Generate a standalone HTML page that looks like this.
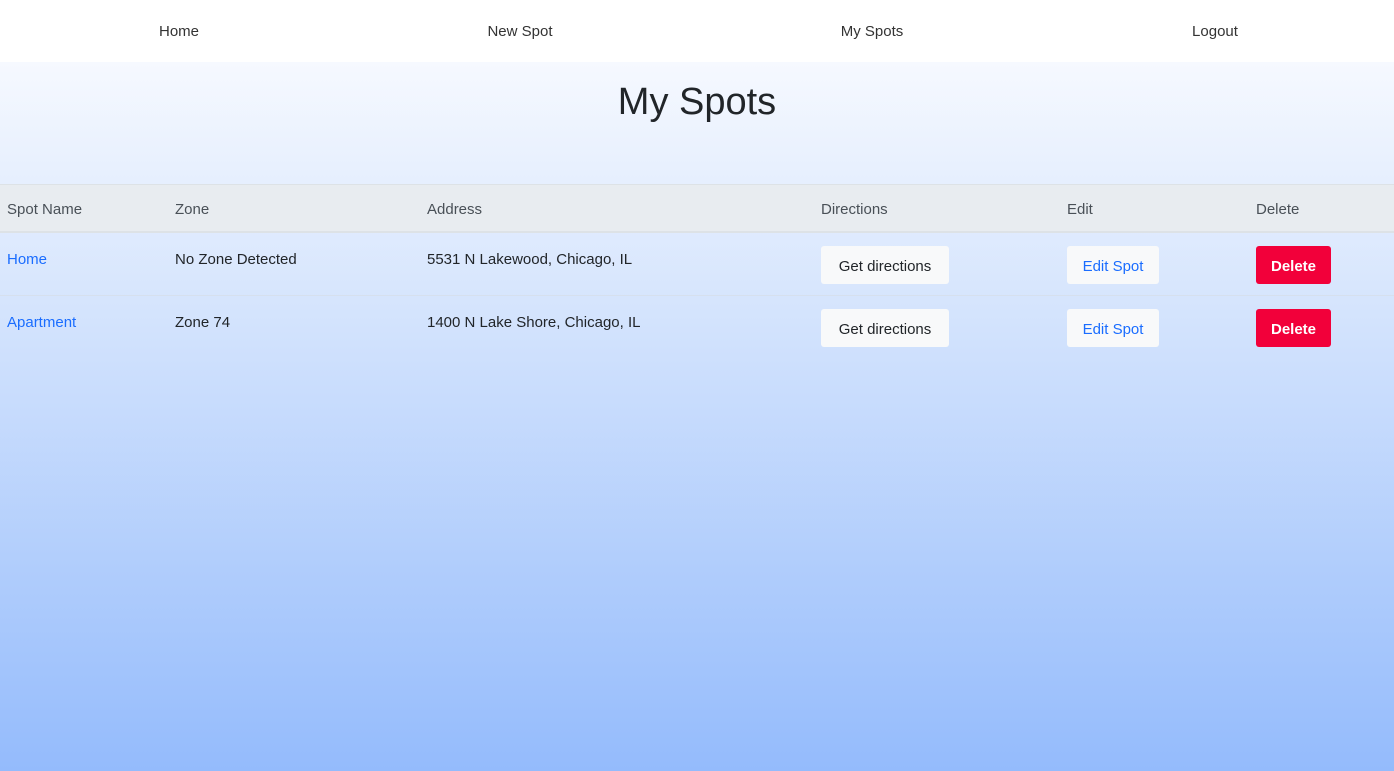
<!DOCTYPE html>
<html><head><style>
*{margin:0;padding:0;box-sizing:border-box}
body{width:1394px;height:771px;overflow:hidden;font-family:"Liberation Sans",sans-serif;background:linear-gradient(#f6f9ff 62px,#d6e5fd 300px,#94bbfc 771px);color:#212529;position:relative}
nav{height:62px;background:#fff;position:relative}
nav span{position:absolute;top:23px;font-size:15px;color:#333;transform:translateX(-50%)}
h1{position:absolute;top:81px;left:0;width:100%;text-align:center;font-weight:400;font-size:38px;color:#212529}
.hdr{position:absolute;top:184px;left:0;width:1394px;height:49px;background:#e8ecf0;border-top:1px solid #dde2e6;border-bottom:2px solid #dde2e6}
.row{position:absolute;left:0;width:1394px;height:63px}
.t{position:absolute;font-size:15px}
.hdr .t{top:16px;color:#495057}
.row .t{top:18px}
.b{position:absolute;top:13px;height:38px;border-radius:3px;font-size:15px;text-align:center;line-height:41px}
.g{left:821px;width:128px;background:#f8f9fa;color:#212529}
.e{left:1067px;width:92px;background:#f8f9fa;color:#1a6dff}
.d{left:1256px;width:75px;background:#f2003a;color:#fff;font-weight:bold}
</style></head><body>
<nav><span style="left:179px">Home</span><span style="left:520px">New Spot</span><span style="left:872px">My Spots</span><span style="left:1215px">Logout</span></nav>
<h1>My Spots</h1>
<div class="hdr"><span class="t" style="left:7px">Spot Name</span><span class="t" style="left:175px">Zone</span><span class="t" style="left:427px">Address</span><span class="t" style="left:821px">Directions</span><span class="t" style="left:1067px">Edit</span><span class="t" style="left:1256px">Delete</span></div>
<div class="row" style="top:233px;border-bottom:1px solid #d6e0ee"><span class="t" style="left:7px;color:#1a6dff">Home</span><span class="t" style="left:175px">No Zone Detected</span><span class="t" style="left:427px">5531 N Lakewood, Chicago, IL</span><div class="b g">Get directions</div><div class="b e">Edit Spot</div><div class="b d">Delete</div></div>
<div class="row" style="top:296px"><span class="t" style="left:7px;color:#1a6dff">Apartment</span><span class="t" style="left:175px">Zone 74</span><span class="t" style="left:427px">1400 N Lake Shore, Chicago, IL</span><div class="b g">Get directions</div><div class="b e">Edit Spot</div><div class="b d">Delete</div></div>
</body></html>
